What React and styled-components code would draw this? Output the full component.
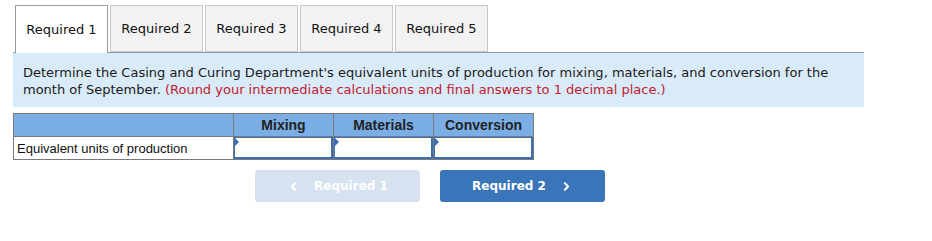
import styled, { createGlobalStyle } from "styled-components";
import { ChevronLeft, ChevronRight } from "lucide-react";

const GlobalStyle = createGlobalStyle`
  body {
    margin: 0;
    background: #fff;
    font-family: "DejaVu Sans", Verdana, sans-serif;
  }
`;

const TABS = ["Required 1", "Required 2", "Required 3", "Required 4", "Required 5"];
const COLUMNS = ["Mixing", "Materials", "Conversion"];

function App() {
  return (
    <>
      <GlobalStyle />
      <Page>
        <TabRow>
          {TABS.map((tab, i) => (
            <Tab key={tab} $active={i === 0}>
              {tab}
            </Tab>
          ))}
        </TabRow>
        <Panel>
          Determine the Casing and Curing Department's equivalent units of
          production for mixing, materials, and conversion for the month of
          September. <Note>(Round your intermediate calculations and final answers to 1 decimal place.)</Note>
        </Panel>
        <Table>
          <thead>
            <tr>
              <HeadCell $wide />
              {COLUMNS.map((c) => (
                <HeadCell key={c}>{c}</HeadCell>
              ))}
            </tr>
          </thead>
          <tbody>
            <tr>
              <LabelCell>Equivalent units of production</LabelCell>
              {COLUMNS.map((c) => (
                <InputCell key={c}>
                  <Input />
                </InputCell>
              ))}
            </tr>
          </tbody>
        </Table>
        <NavRow>
          <NavButton disabled>
            <ChevronLeft size={13} strokeWidth={3.5} />
            Required 1
          </NavButton>
          <NavButton>
            Required 2
            <ChevronRight size={13} strokeWidth={3.5} />
          </NavButton>
        </NavRow>
      </Page>
    </>
  );
}

const Page = styled.div`
  padding: 5px 0 0 13px;
  width: 851px;
`;

const TabRow = styled.div`
  display: flex;
  gap: 2px;
  padding-left: 2px;
  border-bottom: 1px solid #9a9a9a;
  height: 47px;
`;

const Tab = styled.div`
  width: 93px;
  height: ${(p) => (p.$active ? "48px" : "47px")};
  box-sizing: border-box;
  display: flex;
  align-items: center;
  justify-content: center;
  font-size: 13px;
  color: #111;
  background: ${(p) => (p.$active ? "#fff" : "#f2f2f2")};
  border: 1px solid ${(p) => (p.$active ? "#9a9a9a" : "#c8c8c8")};
  border-bottom: ${(p) => (p.$active ? "none" : "1px solid #c8c8c8")};
  position: relative;
  z-index: 1;
`;

const Panel = styled.div`
  background: #d9eaf8;
  padding: 11px 10px 9px 10px;
  font-size: 13px;
  line-height: 17px;
  color: #1a1a1a;
`;

const Note = styled.span`
  color: #c0202d;
`;

const Table = styled.table`
  margin-top: 6px;
  border-collapse: collapse;
  font-family: "Liberation Sans", Arial, sans-serif;
`;

const HeadCell = styled.th`
  width: ${(p) => (p.$wide ? "219px" : "99px")};
  height: 22px;
  padding: 0;
  background: #7aaee5;
  border: 1px solid #7a7a7a;
  color: #222;
  font-size: 14px;
  font-weight: bold;
  text-align: center;
`;

const LabelCell = styled.td`
  height: 22px;
  padding: 0 3px;
  border: 1px solid #7a7a7a;
  color: #111;
  font-size: 13px;
`;

const InputCell = styled.td`
  padding: 0;
  border: 1px solid #7a7a7a;
  position: relative;

  &::before {
    content: "";
    position: absolute;
    left: 1px;
    top: 1px;
    border-top: 4px solid transparent;
    border-bottom: 4px solid transparent;
    border-left: 4px solid #3b6fb3;
    z-index: 1;
  }
`;

const Input = styled.input`
  display: block;
  width: 100%;
  height: 22px;
  box-sizing: border-box;
  border: 1px solid #3b6fb3;
  border-right-width: 2px;
  border-bottom-width: 2px;
  margin: 0;
  outline: none;
  background: #fff;
`;

const NavRow = styled.div`
  display: flex;
  gap: 20px;
  padding-left: 242px;
  margin-top: 10px;
`;

const NavButton = styled.button`
  width: 165px;
  height: 32px;
  display: flex;
  align-items: center;
  justify-content: center;
  gap: 14px;
  border: none;
  border-radius: 3px;
  background: ${(p) => (p.disabled ? "#d6e2f0" : "#3a75b9")};
  color: #fff;
  font-family: "DejaVu Sans", Verdana, sans-serif;
  font-size: 12px;
  font-weight: bold;
  cursor: ${(p) => (p.disabled ? "default" : "pointer")};
`;

export default App;
